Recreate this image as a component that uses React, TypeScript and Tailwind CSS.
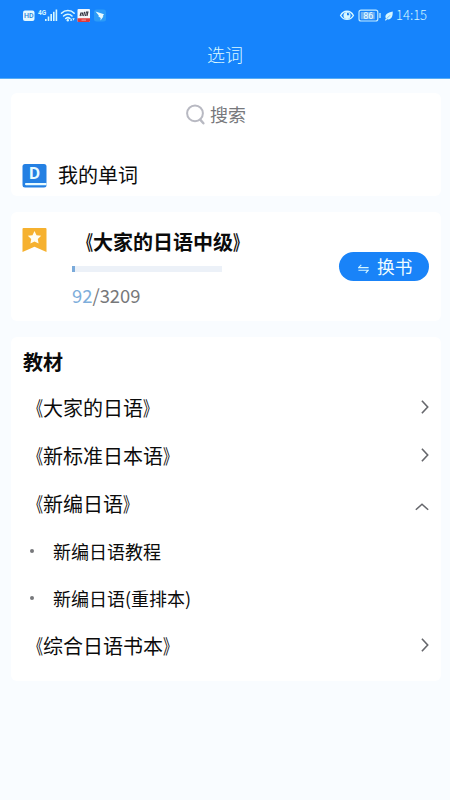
import clsx from 'clsx';
import { useState } from 'react';

type Book = {
  title: string;
  children?: string[];
};

const books: Book[] = [
  { title: '大家的日语' },
  { title: '新标准日本语' },
  { title: '新编日语', children: ['新编日语教程', '新编日语(重排本)'] },
  { title: '综合日语书本' },
];

const learned = 92;
const total = 3209;

function StatusBar() {
  return (
    <div className="flex h-[31px] items-center justify-between pl-[23px] pr-[22px]">
      <svg width="84" height="16" viewBox="0 0 84 16" className="overflow-visible">
        {/* HD badge */}
        <rect x="0" y="2.5" width="11.5" height="10.5" rx="2" fill="#e2f8ff" />
        <text x="5.7" y="10.4" fontSize="7" fontWeight="500" textAnchor="middle" fill="#2a82dc" className="font-['Roboto',sans-serif]">HD</text>
        {/* signal */}
        <text x="15" y="6.8" fontSize="6.5" fontWeight="700" fill="#d6f7ff" className="font-['Roboto',sans-serif]">4G</text>
        <g fill="#d6f7ff">
          <rect x="22" y="11" width="1.6" height="2" />
          <rect x="24.7" y="8.5" width="1.6" height="4.5" />
          <rect x="27.4" y="6" width="1.6" height="7" />
          <rect x="30" y="3.8" width="1.6" height="9.2" />
          <rect x="32.6" y="1.5" width="1.6" height="11.5" />
        </g>
        {/* wifi */}
        <g fill="none" stroke="#d6f7ff" strokeWidth="1.6" strokeLinecap="round">
          <path d="M38.5 5.2C42 1.6 47.8 1.6 51.2 5.2" />
          <path d="M40.6 8C43 5.7 46.7 5.7 49 8" />
          <path d="M42.7 10.5C44 9.4 45.7 9.4 47 10.5" />
        </g>
        <circle cx="44.8" cy="12.2" r="1.2" fill="#d6f7ff" />
        <path d="M47 12.8l1.2-2.6 1.2 2.6zM49.3 10.2l1.2 2.6 1.2-2.6z" fill="#d6f7ff" />
        {/* app notifications */}
        <rect x="54.5" y="1" width="12.5" height="13" rx="1" fill="#f4f7fb" />
        <path d="M54.5 10.2h12.5V13a1 1 0 0 1-1 1H55.5a1 1 0 0 1-1-1z" fill="#dd3b3d" />
        <path d="M57.1 8l.8-3h1.7l-.7 3M60.6 8l1-4.2M62.5 8l.9-4h1.5l-.9 4" stroke="#30313e" strokeWidth="1.1" fill="none" />
        <path d="M58.5 12.1h4.5" stroke="#f6b5b3" strokeWidth=".8" />
        <rect x="71" y="1.5" width="12" height="12" rx="2.5" fill="#2b9bf8" />
        <path d="M72.5 3.5L81 6.2 79.7 8.2 80.4 8.5 77.5 12.5 77.7 9.9 75.3 8.2 75.8 7.4z" fill="#e6fbff" />
      </svg>

      <div className="flex items-center">
        <svg width="56" height="16" viewBox="0 0 56 16" className="overflow-visible">
          {/* eye comfort */}
          <path d="M.6 7.5C3.5 1.8 10.5 1.8 13.4 7.5 10.5 12.7 3.5 12.7.6 7.5z" fill="none" stroke="#d6f7ff" strokeWidth="1.4" />
          <circle cx="7" cy="7.4" r="3.5" fill="#d6f7ff" />
          <path d="M7 4.8a2.2 2.2 0 0 1 2.2 2.4H7z" fill="#1a80ee" />
          {/* battery */}
          <rect x="19" y="2.2" width="18.8" height="10.8" rx="2" fill="none" stroke="#bfeaff" strokeWidth="1.2" />
          <rect x="20.8" y="4" width="14" height="7.2" rx=".5" fill="#70b1f3" />
          <path d="M40 5v5" stroke="#bfeaff" strokeWidth="1.4" />
          <text x="28.3" y="10.9" fontSize="9" textAnchor="middle" fill="#eaffff" className="font-['Roboto',sans-serif]">86</text>
          {/* leaf */}
          <path d="M52.7 3.6C53 8.8 51.2 12 47.2 11.3L45.7 12.7 45 12 46 10.6C44 7 47.5 4.5 52.7 3.6z" fill="#d6f7ff" />
          <path d="M46.5 10.8L50 7.3" stroke="#1a80ee" strokeWidth=".5" />
        </svg>
        <span className="mt-[-1px] w-[32px] whitespace-nowrap text-[13px] leading-[16px] font-light text-[#d3f5ff]">14:15</span>
      </div>
    </div>
  );
}

// Book title marks are set a little narrower than the font draws them
function BookTitle({ children }: { children: string }) {
  return (
    <span className="whitespace-nowrap">
      <span className="inline-block origin-right scale-x-[0.7]">《</span>
      {children}
      <span className="inline-block origin-left scale-x-[0.7]">》</span>
    </span>
  );
}

function Arrow({ open }: { open: boolean }) {
  return open ? (
    <svg width="14" height="8" viewBox="0 0 14 8" className="mr-px mt-[6px]">
      <path d="M.8 6.8L7 1.3l6.2 5.5" fill="none" stroke="#66676c" strokeWidth="1.5" />
    </svg>
  ) : (
    <svg width="8" height="14" viewBox="0 0 8 14" className="mr-px mt-[-2px]">
      <path d="M.9.8L6.7 7 .9 13.2" fill="none" stroke="#66676c" strokeWidth="1.6" />
    </svg>
  );
}

export default function App() {
  const [openTitle, setOpenTitle] = useState('新编日语');

  return (
    <div className="flex h-[800px] w-[450px] flex-col overflow-hidden bg-[#f9fcff] font-['Noto_Sans_CJK_SC',sans-serif] text-[#0b0b0b]">
      <header className="h-[79px] shrink-0 border-b border-[#57adf5] bg-[#1684fc]">
        <StatusBar />
        <h1 className="flex h-[47px] items-center justify-center text-[18px] font-light text-[#dcf9ff]">选词</h1>
      </header>

      <main className="flex flex-col gap-4 pl-[11px] pr-[9px] pt-[14px]">
        <section className="h-[103px] rounded-md bg-white">
          <div className="flex h-[43px] items-center justify-center gap-[4px] pr-[20px] text-[18px] text-[#77787c]">
            <svg width="20" height="22" viewBox="0 0 20 22">
              <circle cx="9" cy="9.3" r="7.9" fill="none" stroke="#b8b9c2" strokeWidth="2" />
              <path d="M14.2 15.6l3.2 3.7" stroke="#b8b9c2" strokeWidth="2.4" strokeLinecap="round" />
            </svg>
            <span>搜索</span>
          </div>
          <div className="mt-[17px] flex h-[44px] items-center gap-[11px] pl-[11px]">
            <svg width="25" height="24" viewBox="0 0 25 24" className="mt-px overflow-visible">
              <rect x=".5" y="0" width="24" height="23.5" rx="2.5" fill="#2480e3" />
              <text x="12.6" y="15.2" fontSize="15.5" fontWeight="700" textAnchor="middle" fill="#e8fbff" className="font-['Open_Sans',sans-serif]">D</text>
              <path d="M4 19h20.500v2.200H4a1.100 1.100 0 0 1 0-2.200z" fill="#e8fbff" />
            </svg>
            <span className="text-[20px]">我的单词</span>
          </div>
        </section>

        <section className="flex h-[109px] rounded-md bg-white pl-[11px] pr-[12px]">
          <svg width="25" height="25" viewBox="0 0 25 25" className="mt-[16px]">
            <path d="M1.5 0h22a1 1 0 0 1 1 1v23L12.5 18.8.5 24V1a1 1 0 0 1 1-1z" fill="#f6b12f" />
            <path d="M12.5 3l2 4.2 4.7.6-3.4 3.2.8 4.6-4.1-2.2-4.1 2.2.8-4.6-3.4-3.2 4.7-.6z" fill="#fffdf2" />
          </svg>
          <div className="ml-[25px] flex-1">
            <h2 className="ml-px mt-[16px] text-[20px] leading-[28px] font-bold">
              <BookTitle>大家的日语中级</BookTitle>
            </h2>
            <div className="mt-[10px] h-[6px] w-[150px] bg-[#ecf1f8]">
              <div className="h-full bg-[#7aaada]" style={{ width: `${(learned / total) * 100 - 0.8}%` }} />
            </div>
            <p className="mt-[10px] text-[18.4px] leading-[26px] text-[#77787a]">
              <span className="text-[#7eaedb]">{learned}</span>/{total}
            </p>
          </div>
          <button className="mt-[40px] flex h-[29px] w-[90px] items-center gap-[8px] rounded-full bg-[#1983f8] pl-[19px] text-[17.7px] text-[#effcff]">
            <svg width="11" height="10" viewBox="0 0 11 10" className="mt-[4px] shrink-0">
              <path d="M3.3.8L.6 3.6h10M.4 6.2h10L7.7 9" fill="none" stroke="#d5f6ff" strokeWidth="1.1" />
            </svg>
            <span>换书</span>
          </button>
        </section>

        <section className="h-[344px] rounded-md bg-white pl-[12px] pr-[11px]">
          <h2 className="mb-[-2px] flex h-[49px] items-center text-[20px] font-bold">教材</h2>
          <ul>
            {books.map((book) => {
              const open = book.title === openTitle;
              return (
                <li key={book.title}>
                  <button
                    className="flex h-[48px] w-full items-center justify-between text-[20px]"
                    onClick={() => setOpenTitle(open ? '' : book.title)}
                  >
                    <BookTitle>{book.title}</BookTitle>
                    <Arrow open={open && !!book.children} />
                  </button>
                  {book.children && (
                    <ul className={clsx(!open && 'hidden')}>
                      {book.children.map((child) => (
                        <li key={child} className="flex h-[47px] items-center text-[18px]">
                          <span className="ml-[7px] mr-[19px] mt-[-1px] h-[4px] w-[4px] rounded-full bg-[#77787b]" />
                          {child}
                        </li>
                      ))}
                    </ul>
                  )}
                </li>
              );
            })}
          </ul>
        </section>
      </main>
    </div>
  );
}
